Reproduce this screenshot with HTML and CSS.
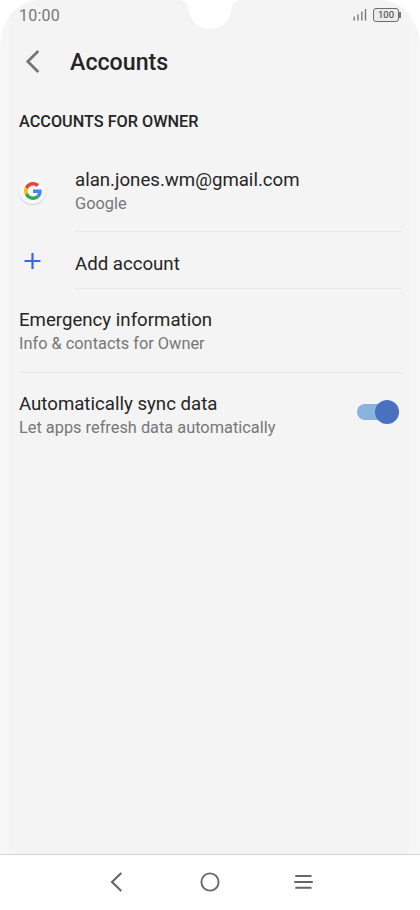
FILE: index.html
```html
<!DOCTYPE html>
<html lang="en">
<head>
<meta charset="utf-8">
<title>Accounts</title>
<link rel="stylesheet" href="styles.css">
</head>
<body>
<div class="phone">
  <svg class="notch" width="60" height="30" viewBox="0 0 60 30"><path d="M0 0C6 1 8 4 8.500 9C9.500 20 18 29 30 29S50.500 20 51.500 9C52 4 54 1 60 0Z" fill="#fff"/></svg>
  <div class="status">
    <span class="time">10:00</span>
    <div class="indicators">
      <svg width="14" height="13" viewBox="0 0 14 13" stroke="#777" stroke-width="1.400"><path d="M1.200 8.500V12.500M5 6.500V12.500M8.800 3.500V12.500M12.500 1V12.500"/></svg>
      <div class="battery">100</div>
    </div>
  </div>
  <header class="header">
    <svg width="14" height="24" viewBox="0 0 14 24" fill="none" stroke="#777" stroke-width="2.800"><path d="M12.300 1L1.800 11.500L12.300 22"/></svg>
    <h1 class="title">Accounts</h1>
  </header>
  <main class="content">
    <h2 class="section">ACCOUNTS FOR OWNER</h2>
    <div class="account">
      <div class="avatar">
        <svg width="18" height="18" viewBox="0 0 48 48"><path fill="#EA4335" d="M24 9.500c3.540 0 6.710 1.220 9.210 3.600l6.850-6.850C35.900 2.380 30.470 0 24 0 14.620 0 6.510 5.380 2.560 13.220l7.980 6.190C12.430 13.720 17.740 9.500 24 9.500z"/><path fill="#4285F4" d="M46.980 24.550c0-1.570-.15-3.090-.38-4.550H24v9.020h12.940c-.58 2.960-2.260 5.480-4.780 7.180l7.730 6c4.510-4.180 7.090-10.360 7.090-17.650z"/><path fill="#FBBC05" d="M10.530 28.590c-.48-1.450-.76-2.990-.76-4.590s.27-3.140.76-4.590l-7.980-6.190C.92 16.460 0 20.120 0 24s.92 7.540 2.560 10.780l7.970-6.190z"/><path fill="#34A853" d="M24 48c6.480 0 11.930-2.130 15.890-5.810l-7.730-6c-2.150 1.450-4.920 2.300-8.160 2.300-6.260 0-11.570-4.220-13.470-9.910l-7.980 6.190C6.510 42.620 14.620 48 24 48z"/></svg>
      </div>
      <div class="cell email-cell"><div class="name">alan.jones.wm@gmail.com</div><div class="sub">Google</div></div>
    </div>
    <div class="account">
      <svg class="plus" width="28" height="18" viewBox="0 0 28 18" stroke="#3568ee" stroke-width="2.200"><path d="M5.500 9H21.500M13.500 1V17"/></svg>
      <div class="cell add-cell"><div class="name">Add account</div></div>
    </div>
    <div class="row emergency-row"><div class="name">Emergency information</div><div class="sub">Info &amp; contacts for Owner</div></div>
    <div class="row sync-row">
      <div><div class="name">Automatically sync data</div><div class="sub">Let apps refresh data automatically</div></div>
      <div class="switch"><div class="knob"></div></div>
    </div>
  </main>
  <nav class="nav">
    <svg width="20" height="20" viewBox="0 0 20 20" fill="none" stroke="#666" stroke-width="2.100"><path d="M15.300 1L6 10L15.300 19"/></svg>
    <svg width="20" height="20" viewBox="0 0 20 20" fill="none" stroke="#666" stroke-width="1.900"><circle cx="10" cy="10" r="8.600"/></svg>
    <svg width="20" height="20" viewBox="0 0 20 20" stroke="#666" stroke-width="2"><path d="M1.300 4H17.500M.200 10H18.800M1.300 15.800H17.500"/></svg>
  </nav>
</div>
</body>
</html>
```
FILE: styles.css
```css
* { box-sizing: border-box; }
body { margin: 0; background: #fff; font-family: Roboto, sans-serif; color: #252525; }
.phone { position: relative; width: 420px; height: 910px; display: flex; flex-direction: column; overflow: hidden; border-radius: 40px 40px 0 0 / 46px 46px 0 0; background: linear-gradient(90deg, #f6f6f6 10px, #f4f4f4 10px 409px, #f6f6f6 409px); }
.notch { position: absolute; left: 180px; top: 0; }
.status { height: 30px; display: flex; align-items: center; justify-content: space-between; padding: 0 19px; }
.time { font-size: 16px; color: #777; letter-spacing: .2px; }
.indicators { display: flex; align-items: center; gap: 6px; margin-top: -1px; }
.battery { position: relative; width: 26px; height: 14px; margin-right: 2px; border: 1px solid #6c6c6c; border-radius: 3px; background: #ebebeb; font-size: 9.500px; line-height: 12px; text-align: center; font-weight: 400; color: #333; }
.battery::after { content: ""; position: absolute; right: -3px; top: 3px; width: 2px; height: 6px; background: #777; }
.header { height: 64px; display: flex; align-items: center; padding-left: 26px; gap: 30px; }
.title { margin: 0; font-size: 23.200px; line-height: 28px; font-weight: 500; }
.content { flex: 1; padding: 0 19px; }
.section { margin: 18px 0 17px; font-size: 16.250px; line-height: 20px; font-weight: 500; }
.account { display: flex; }
.avatar { width: 27px; height: 27px; margin: 28px 29px 0 0; border-radius: 50%; display: flex; align-items: center; justify-content: center; background: #f8f8f8; box-shadow: 0 1px 1px #ccc; }
.cell { flex: 1; margin-right: -1px; border-bottom: 1px solid #e8e8e8; }
.email-cell { height: 83px; padding-top: 19px; }
.add-cell { height: 57px; padding-top: 20px; }
.plus { margin: 20px 28px 0 0; }
.name { font-size: 18.650px; line-height: 24px; white-space: nowrap; }
.sub { margin-top: 1px; font-size: 16.350px; line-height: 22px; color: #777; white-space: nowrap; }
.row { padding-top: 19px; }
.emergency-row { height: 84px; margin-right: -1px; border-bottom: 1px solid #e5e5e5; }
.sync-row { display: flex; justify-content: space-between; }
.switch { display: flex; justify-content: flex-end; align-items: center; width: 42px; height: 16px; border-radius: 8px; background: #88b3dc; margin: 12px 2px 0 0; }
.knob { width: 24px; height: 24px; flex: none; border-radius: 50%; background: #4a70c0; }
.nav { height: 56px; display: flex; align-items: center; justify-content: center; gap: 74px; padding-bottom: 1px; border-top: 1px solid #d4d4d4; background: #fff; }
```
